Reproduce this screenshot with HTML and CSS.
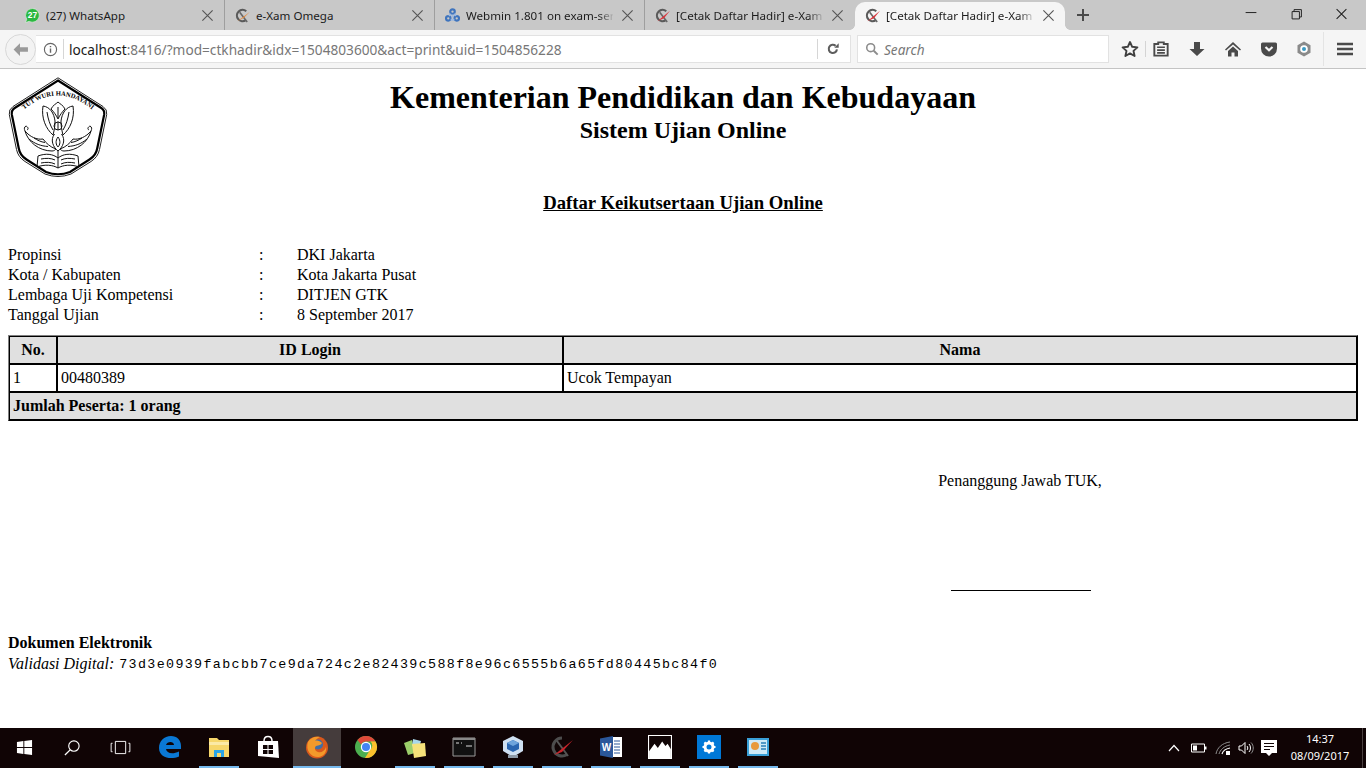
FILE: index.html
```html
<!DOCTYPE html>
<html lang="id">
<head>
<meta charset="utf-8">
<title>[Cetak Daftar Hadir] e-Xam Omega</title>
<link rel="stylesheet" href="styles.css">
</head>
<body>
<svg class="sprites" width="0" height="0">
  <symbol id="omega" viewBox="0 0 16 16">
    <path d="M12 3.500A6 6 0 1 0 11.500 13" fill="none" stroke="#5a5a5a" stroke-width="2.300"/>
    <path d="M5 4.500 13 15" stroke="#666" stroke-width="1.700"/>
    <path d="M2.500 14 16 3 9.500 11Z" fill="#d9343a"/>
  </symbol>
  <symbol id="omega-orange" viewBox="0 0 16 16">
    <path d="M12 3.500A6 6 0 1 0 11.500 13" fill="none" stroke="#5a5a5a" stroke-width="2.300"/>
    <path d="M5 4.500 13 15" stroke="#666" stroke-width="1.700"/>
    <path d="M2.500 14 16 4 9.500 10.500Z" fill="#e58a3b"/>
  </symbol>
  <symbol id="close" viewBox="0 0 14 14">
    <path d="M1.500 1.500l11 11M12.500 1.500l-11 11" stroke="#555" stroke-width="1.200" fill="none"/>
  </symbol>
</svg>

<div class="tabbar">
  <div class="tab tab-first">
    <svg class="fav" viewBox="0 0 16 16"><path d="M8 .5a7.300 7.300 0 1 1-3.600 13.700L.6 15.500l1.300-3.600A7.300 7.300 0 0 1 8 .5Z" fill="#2bb741" stroke="#e8f5e8" stroke-width=".6"/><text x="8" y="11" class="fav-num">27</text></svg>
    <span class="tab-title">(27) WhatsApp</span>
    <svg class="tab-x"><use href="#close"/></svg>
  </div>
  <div class="tab">
    <svg class="fav"><use href="#omega-orange"/></svg>
    <span class="tab-title">e-Xam Omega</span>
    <svg class="tab-x"><use href="#close"/></svg>
  </div>
  <div class="tab">
    <svg class="fav" viewBox="0 0 16 16"><g fill="none" stroke="#3f74bd" stroke-width="2.300"><circle cx="8" cy="3.800" r="2.400"/><circle cx="3.500" cy="11" r="2.400"/><circle cx="12.500" cy="11" r="2.400"/></g><path d="M6 6 4.500 8.500M10 6l1.500 2.500M6 12.500h4M8 7v3" stroke="#9db9e0" stroke-width="2" fill="none"/></svg>
    <span class="tab-title tab-fade">Webmin 1.801 on exam-serv</span>
    <svg class="tab-x"><use href="#close"/></svg>
  </div>
  <div class="tab tab-last">
    <svg class="fav"><use href="#omega"/></svg>
    <span class="tab-title tab-fade">[Cetak Daftar Hadir] e-Xam F</span>
    <svg class="tab-x"><use href="#close"/></svg>
  </div>
  <div class="tab tab-active">
    <svg class="fav"><use href="#omega"/></svg>
    <span class="tab-title tab-fade">[Cetak Daftar Hadir] e-Xam F</span>
    <svg class="tab-x"><use href="#close"/></svg>
  </div>
  <svg class="newtab" viewBox="0 0 12 12"><path d="M6 0v12M0 6h12" stroke="#4a4a4a" stroke-width="2"/></svg>
  <div class="winctl">
    <svg viewBox="0 0 46 30"><path d="M17 12.500h11" stroke="#222"/></svg>
    <svg viewBox="0 0 46 30"><path d="M18.500 11.500h7.500v7.500h-7.500zM20.500 11.500v-2h7.500v7.500h-2" fill="none" stroke="#222"/></svg>
    <svg viewBox="0 0 46 30"><path d="M18 9l10 10M28 9l-10 10" stroke="#222" stroke-width="1.100"/></svg>
  </div>
</div>

<div class="toolbar">
  <div class="back"><svg viewBox="0 0 16 16"><path d="M7.500 2 1.500 8l6 6V10.200H15V5.800H7.500Z" fill="#9a9a9a"/></svg></div>
  <div class="urlbar">
    <svg class="info" viewBox="0 0 16 16"><circle cx="8" cy="8" r="6.500" fill="none" stroke="#666" stroke-width="1.200"/><path d="M8 7v4.500M8 4.200v1.500" stroke="#666" stroke-width="1.500"/></svg>
    <span class="sep"></span>
    <span class="url"><span class="url-host">localhost</span>:8416/?mod=ctkhadir&amp;idx=1504803600&amp;act=print&amp;uid=1504856228</span>
    <span class="sep sep-reload"></span>
    <svg class="reload" viewBox="0 0 16 16"><path d="M12.500 8.500A4.700 4.700 0 1 1 11 4.400" fill="none" stroke="#5d5d5d" stroke-width="2.400"/><path d="M9.500 6.500h5v-5Z" fill="#5d5d5d"/></svg>
  </div>
  <div class="searchbar">
    <svg class="mag" viewBox="0 0 16 16"><circle cx="6.500" cy="6.500" r="4.500" fill="none" stroke="#8c8c8c" stroke-width="1.800"/><path d="M10 10l4.500 4.500" stroke="#8c8c8c" stroke-width="2.200"/></svg>
    <span>Search</span>
  </div>
  <div class="tools">
    <svg class="ti ti-star" viewBox="0 0 18 18"><path d="M9 2l2.200 4.800 5.200.6-3.900 3.500 1.100 5.100L9 13.400 4.400 16l1.100-5.100L1.600 7.400l5.200-.6Z" fill="none" stroke="#3f3f3f" stroke-width="1.900" stroke-linejoin="round"/></svg>
    <span class="tool-sep"></span>
    <svg class="ti ti-clip" viewBox="0 0 18 18"><path d="M3 4.500h3.500V3h5v1.500H15v10.500H3Z" fill="none" stroke="#4a4a4a" stroke-width="1.700"/><path d="M5.500 7.500h7M5.500 10h7M5.500 12.500h7" stroke="#4a4a4a" stroke-width="1.400"/></svg>
    <svg class="ti ti-down" viewBox="0 0 18 18"><path d="M6 2h6v7h4.500L9 16 1.500 9H6Z" fill="#4a4a4a"/></svg>
    <svg class="ti ti-home" viewBox="0 0 18 18"><path d="M9 2 1 9.500l1 1L9 4.500l7 6 1-1Z" fill="#4a4a4a"/><path d="M4 11 9 6.500 14 11v5.500h-3.500v-4h-3v4H4Z" fill="#4a4a4a"/></svg>
    <svg class="ti ti-pocket" viewBox="0 0 18 18"><path d="M2.500 2.500h13a1.500 1.500 0 0 1 1.500 1.500v4.500a8 8 0 0 1-16 0V4a1.500 1.500 0 0 1 1.500-1.500Z" fill="#4a4a4a"/><path d="M5.500 7 9 10.300 12.500 7" fill="none" stroke="#f5f5f5" stroke-width="2.200"/></svg>
    <svg class="ti ti-eye" viewBox="0 0 18 18"><path d="M9 1.500l6.500 3.700v7.600L9 16.500l-6.500-3.700V5.200Z" fill="#8a8a8a"/><circle cx="9" cy="9" r="3.800" fill="#fff"/><circle cx="9" cy="9" r="2" fill="#3a9ac4"/></svg>
    <span class="tool-sep tool-sep-tall"></span>
    <svg class="ti ti-menu" viewBox="0 0 16 14"><path d="M0 2h16M0 7h16M0 12h16" stroke="#4a4a4a" stroke-width="2.600"/></svg>
  </div>
</div>

<main class="page">
  <header class="head">
    <svg class="logo" viewBox="0 0 100 100">
      <path d="M50 .8 95 29.500Q99.500 32.500 98.700 37.500L91.500 72.500Q90 80 83 84.500L63 97Q50 102 37 97L17 84.500Q10 80 8.500 72.500L1.300 37.500Q.5 32.500 5 29.500Z" fill="#fff" stroke="#222" stroke-width="1"/>
      <path d="M50 3.500 93.300 31Q96.800 33.300 96.200 37.500L89.200 71.500Q88 78.500 81.500 82.500L62 95Q50 99.500 38 95L18.500 82.500Q12 78.500 10.800 71.500L3.800 37.500Q3.200 33.300 6.700 31Z" fill="none" stroke="#000" stroke-width="2.200"/>
      <path id="logoArc" d="M6 42Q50 -5 94 42" fill="none"/>
      <text class="logo-text"><textPath href="#logoArc" startOffset="50%" text-anchor="middle">TUT WURI HANDAYANI</textPath></text>
      <g fill="none" stroke="#111" stroke-width="1">
        <path d="M35 29C42 30 46 36 47 44 47 50 46 54 45 58 38 52 33 41 35 29Z"/>
        <path d="M65 29C58 30 54 36 53 44 53 50 54 54 55 58 62 52 67 41 65 29Z"/>
        <path d="M43 32C45 28 48 27 50 25 52 27 55 28 57 32 54 35 52 38 50 42 48 38 46 35 43 32Z"/>
        <path d="M39 35C40 42 42 48 45 53M61 35C60 42 58 48 55 53M50 30V41"/>
        <circle cx="50" cy="49" r="4"/>
        <path d="M50 44.500V53M46.500 57C42 63 45 70 50 74 55 70 58 63 53.500 57"/>
        <path d="M50 60C47 64 48 68 50 70 52 68 53 64 50 60Z"/>
        <path d="M17 54C20 65 31 74 44 74 46 74 47 73 48 72 42 70 38 66 35 62 29 63 22 60 17 54Z"/>
        <path d="M21 62C27 67 33 69 40 69.500M26 61C29 63 33 65 37 65.500M17 54C16 52 16 50 18 49 20 50 21 52 19 53"/>
        <path d="M83 54C80 65 69 74 56 74 54 74 53 73 52 72 58 70 62 66 65 62 71 63 78 60 83 54Z"/>
        <path d="M79 62C73 67 67 69 60 69.500M74 61C71 63 67 65 63 65.500M83 54C84 52 84 50 82 49 80 50 79 52 81 53"/>
        <path d="M30 79C38 76 45 77 50 81 55 77 62 76 70 79L71 90C63 87 55 88 50 91 45 88 37 87 29 90Z"/>
        <path d="M50 74V91M33 82C38 81 43 81 47 83M33 86C38 85 43 85 47 87M67 82C62 81 57 81 53 83M67 86C62 85 57 85 53 87"/>
      </g>
    </svg>
    <div class="titles">
      <h1>Kementerian Pendidikan dan Kebudayaan</h1>
      <h2>Sistem Ujian Online</h2>
    </div>
  </header>

  <h3 class="doc-title">Daftar Keikutsertaan Ujian Online</h3>

  <dl class="meta">
    <dt>Propinsi</dt><dd>:</dd><dd>DKI Jakarta</dd>
    <dt>Kota / Kabupaten</dt><dd>:</dd><dd>Kota Jakarta Pusat</dd>
    <dt>Lembaga Uji Kompetensi</dt><dd>:</dd><dd>DITJEN GTK</dd>
    <dt>Tanggal Ujian</dt><dd>:</dd><dd>8 September 2017</dd>
  </dl>

  <table class="list">
    <colgroup><col class="c-no"><col class="c-id"><col></colgroup>
    <thead>
      <tr><th>No.</th><th>ID Login</th><th>Nama</th></tr>
    </thead>
    <tbody>
      <tr><td>1</td><td>00480389</td><td>Ucok Tempayan</td></tr>
    </tbody>
    <tfoot>
      <tr><th colspan="3">Jumlah Peserta: 1 orang</th></tr>
    </tfoot>
  </table>

  <div class="sign">
    <div class="sign-box">
      <p class="sign-role">Penanggung Jawab TUK,</p>
      <div class="sign-line"></div>
    </div>
  </div>

  <div class="digital">
    <strong>Dokumen Elektronik</strong>
    <p><em>Validasi Digital:</em> <code>73d3e0939fabcbb7ce9da724c2e82439c588f8e96c6555b6a65fd80445bc84f0</code></p>
  </div>
</main>

<footer class="taskbar">
  <div class="task task-sys"><svg viewBox="0 0 18 18"><path d="M1 3.200 7.800 2.200V8.400H1ZM8.800 2 17 1V8.400H8.800ZM1 9.500H7.800V15.800L1 14.800ZM8.800 9.500H17V17L8.800 15.900Z" fill="#fff"/></svg></div>
  <div class="task task-sys"><svg viewBox="0 0 18 18"><circle cx="10.500" cy="7.500" r="5.500" fill="none" stroke="#fff" stroke-width="1.200"/><path d="M6.500 11.500 1 17" stroke="#fff" stroke-width="1.400"/></svg></div>
  <div class="task task-view"><svg viewBox="0 0 22 16"><path d="M5.500 1.500h11v13h-11zM2.500 3.500H1v9h1.500M19.500 3.500H21v9h-1.500" fill="none" stroke="#fff" stroke-width="1"/></svg></div>
  <div class="task"><svg viewBox="0 0 24 24"><path d="M1 13C1 6 6 1 13 1c6 0 10 4 10 10v3H8c.5 4 6 6 13 2.500v5C13 25 1 23 1 13Zm7-3h8c0-4-7-4-8 0Z" fill="#0a78d4"/></svg></div>
  <div class="task task-run"><svg viewBox="0 0 24 24"><path d="M2 3h8l2 2h10v17H2Z" fill="#f6d76b"/><path d="M2 7h20v3H2Z" fill="#fbeaa6"/><path d="M7 15h10v7h-3v-4h-4v4H7Z" fill="#29a4e8"/></svg></div>
  <div class="task"><svg viewBox="0 0 24 24"><path d="M2 6h20l1 17L2 21Z" fill="#fff"/><path d="M8 6c0-6 8-6 8 0" fill="none" stroke="#fff" stroke-width="1.500"/><path d="M7 10h4.500v4H7ZM12.500 10H17v4h-4.500ZM7 15h4.500v4H7ZM12.500 15H17v4h-4.500Z" fill="#100405"/></svg></div>
  <div class="task task-run task-on"><svg viewBox="0 0 24 24"><circle cx="12" cy="12.500" r="11" fill="#d9581c"/><circle cx="13" cy="9.500" r="5" fill="#3f6ea6"/><path d="M3 7c-3 9 4 16 11 15 5-1 8-5 7-10-1 4-5 6-8 5-3-1-4-4-2-6 3-1 5-1 6-3-2-2-5-3-7-2 1-2 3-3 5-4C10 1 5 3 3 7Z" fill="#f39a2a"/></svg></div>
  <div class="task"><svg viewBox="0 0 24 24"><circle cx="12" cy="12" r="11" fill="#4caf50"/><path d="M12 1a11 11 0 0 1 9.500 5.500H12a5.500 5.500 0 0 0-5 3L3.500 5A11 11 0 0 1 12 1Z" fill="#e04a3a"/><path d="M21.500 6.500A11 11 0 0 1 11 23l5-8a5.500 5.500 0 0 0 .5-8.500Z" fill="#fbc02d"/><circle cx="12" cy="12" r="5.200" fill="#fff"/><circle cx="12" cy="12" r="4" fill="#4285f4"/></svg></div>
  <div class="task task-run"><svg viewBox="0 0 24 24"><path d="M1 8 9 5l3 13-7 2Z" fill="#9ccf6a"/><path d="M10 4l8 2-2 8-7-3Z" fill="#a8d8ea"/><path d="M9 9l13-1 1 13-12 2Z" fill="#f6e27a"/></svg></div>
  <div class="task task-run"><svg viewBox="0 0 24 24"><path d="M1 3h22v18H1Z" fill="#111" stroke="#999"/><path d="M1 3h22v2H1Z" fill="#888"/><path d="M4 8h3M9 8h1M14 11h6" stroke="#ddd"/></svg></div>
  <div class="task task-run"><svg viewBox="0 0 24 24"><path d="M12 1 22 6v10l-10 6L2 16V6Z" fill="#cfe0f2"/><path d="M12 5l6 3v6l-6 3-6-3V8Z" fill="#2a65b0"/><path d="M12 11 6 8l6-3 6 3Z" fill="#6ea4dc"/><path d="M7 20h10v3H7Z" fill="#8e9aa8"/></svg></div>
  <div class="task task-run"><svg viewBox="0 0 24 24"><path d="M12 3a9 9 0 1 0 5 16.500" fill="none" stroke="#4d4d4d" stroke-width="3"/><path d="M7 6l11 15" stroke="#555" stroke-width="2"/><path d="M4 20 23 5 12 17Z" fill="#c9242b"/></svg></div>
  <div class="task task-run"><svg viewBox="0 0 24 24"><path d="M12 2h11v20H12Z" fill="#fff"/><path d="M15 6h6M15 9h6M15 12h6M15 15h6M15 18h6" stroke="#2b579a"/><path d="M1 3.500 14 1v22L1 20.500Z" fill="#2b579a"/><text x="7.500" y="15.500" class="word-w">W</text></svg></div>
  <div class="task task-run"><svg viewBox="0 0 22 22"><path d="M.5.500h21v21H.5Z" fill="#100405" stroke="#fff"/><path d="M1 21v-6l5-7 3 4 4-6 3 4 2-2 3 5v8Z" fill="#fff"/></svg></div>
  <div class="task task-run"><svg class="ic-set" viewBox="0 0 24 24"><path d="M0 0h24v24H0Z" fill="#0078d7"/><circle cx="12" cy="12" r="4" fill="none" stroke="#fff" stroke-width="3"/><path d="M12 5.500v13M5.500 12h13M7.400 7.400l9.200 9.200M16.600 7.400l-9.200 9.200" stroke="#fff" stroke-width="2.200" stroke-dasharray="2.400 8.200"/></svg></div>
  <div class="task task-run"><svg viewBox="0 0 24 24"><path d="M1 3h22v18H1Z" fill="#3aa0d8"/><path d="M3 5h18v14H3Z" fill="#cfeaf7"/><circle cx="9" cy="11" r="4" fill="#e89a3c"/><path d="M15 8h5M15 11h5M15 14h5" stroke="#2a7fb8" stroke-width="1.500"/></svg></div>
  <div class="tray">
    <svg class="tr tr-up" viewBox="0 0 12 8"><path d="M1 7 6 1.500 11 7" fill="none" stroke="#fff" stroke-width="1.200"/></svg>
    <svg class="tr tr-bat" viewBox="0 0 16 10"><path d="M.5 1h13v8H.5Z" fill="none" stroke="#fff"/><path d="M14 3.500h1.500v3H14ZM2 2.500h4v5H2Z" fill="#fff"/></svg>
    <svg class="tr tr-wifi" viewBox="0 0 16 14"><g fill="none" stroke="#8e8e8e"><path d="M1 13C2 7 7 2 15 1"/><path d="M4 13C5 9 9 5 15 4"/></g><path d="M7 13c.5-2 3-5 8-6" fill="none" stroke="#fff" stroke-width="1.200"/><path d="M11 10h4v4h-4Z" fill="#fff"/></svg>
    <svg class="tr tr-vol" viewBox="0 0 16 14"><path d="M1 5h2.500L7 1.500v11L3.500 9H1Z" fill="none" stroke="#fff"/><path d="M9 5c1 1 1 3 0 4M11 3c2 2 2 6 0 8" fill="none" stroke="#fff"/><path d="M13 1.500c3 3 3 8 0 11" fill="none" stroke="#8e8e8e"/></svg>
    <svg class="tr tr-note" viewBox="0 0 18 18"><path d="M1 1h16v13h-5l-3 3-3-3H1Z" fill="#fff"/><path d="M4 4.500h10M4 7.500h10M4 10.500h6" stroke="#100405"/></svg>
    <div class="clock"><span>14:37</span><span>08/09/2017</span></div>
    <span class="showdesk"></span>
  </div>
</footer>
</body>
</html>
```
FILE: styles.css
```css
* { box-sizing: border-box; }
html, body { margin: 0; padding: 0; }
body {
  width: 1366px;
  height: 768px;
  overflow: hidden;
  display: flex;
  flex-direction: column;
  background: #fff;
  color: #000;
  font-family: "Liberation Serif", serif;
  font-size: 16px;
}
.sprites { display: block; height: 0; }

/* tab strip */
.tabbar {
  height: 30px;
  flex: none;
  display: flex;
  align-items: stretch;
  padding-left: 15px;
  background: #c8c8c8;
  font-family: "Noto Sans", sans-serif;
  font-size: 11.600px;
  color: #1c1c1c;
}
.tab {
  width: 210px;
  display: flex;
  align-items: center;
  padding: 1px 0 0 10px;
  border-right: 1px solid #9e9e9e;
}
.tab-last { border-right-color: transparent; }
.tab-active {
  position: relative;
  margin-top: 2px;
  background: #f5f5f5;
  border: 0;
  border-radius: 10px 10px 0 0;
  padding-bottom: 2px;
}
.tab-active::before,
.tab-active::after {
  content: "";
  position: absolute;
  bottom: 0;
  width: 5px;
  height: 5px;
}
.tab-active::before {
  left: -5px;
  background: radial-gradient(circle at 0 0, transparent 4.500px, #f5f5f5 5px);
}
.tab-active::after {
  right: -5px;
  background: radial-gradient(circle at 100% 0, transparent 4.500px, #f5f5f5 5px);
}
.fav { width: 15px; height: 15px; flex: none; }
.fav-num { font: bold 9px "Liberation Sans", sans-serif; fill: #fff; text-anchor: middle; }
.tab-title {
  flex: 1;
  min-width: 0;
  margin-left: 6px;
  white-space: nowrap;
}
.tab-fade {
  -webkit-mask-image: linear-gradient(90deg, #000 90%, rgba(0, 0, 0, .1));
  mask-image: linear-gradient(90deg, #000 90%, rgba(0, 0, 0, .1));
}
.tab-x { width: 13px; height: 13px; flex: none; margin: 0 10px 0 8px; }
.newtab { width: 12px; height: 12px; flex: none; align-self: center; margin-left: 12px; }
.winctl { margin-left: auto; padding-right: 2px; display: flex; }
.winctl svg { width: 45px; height: 30px; display: block; }

/* navigation toolbar */
.toolbar {
  height: 39px;
  flex: none;
  display: flex;
  align-items: center;
  padding-left: 5px;
  background: #f5f5f5;
  border-bottom: 1px solid #c4c4c4;
}
.back {
  width: 31px;
  height: 31px;
  flex: none;
  z-index: 1;
  display: flex;
  align-items: center;
  justify-content: center;
  border: 1px solid #d8d8d8;
  border-radius: 50%;
  background: #f3f3f3;
}
.back svg { width: 17px; height: 17px; }
.urlbar {
  width: 815px;
  height: 28px;
  flex: none;
  display: flex;
  align-items: center;
  background: #fff;
  border: 1px solid #e2e2e2;
  border-left: 0;
  font-family: "Noto Sans", sans-serif;
  font-size: 13.660px;
  color: #777;
}
.info { width: 15px; height: 15px; margin-left: 7px; flex: none; }
.sep { width: 1px; height: 20px; background: #d6d6d6; flex: none; margin: 0 5px; }
.url { flex: 1; white-space: nowrap; overflow: hidden; }
.url-host { color: #1a1a1a; }
.sep-reload { margin: 0 8px 0 0; }
.reload { width: 14px; height: 14px; margin-right: 10px; flex: none; }
.searchbar {
  width: 252px;
  height: 28px;
  flex: none;
  margin-left: 6px;
  display: flex;
  align-items: center;
  background: #fff;
  border: 1px solid #e2e2e2;
  font-family: "Noto Sans", sans-serif;
  font-size: 13.600px;
  font-style: italic;
  color: #777;
}
.mag { width: 14px; height: 14px; margin: 0 5px 0 7px; flex: none; }
.tools { flex: 1; display: flex; align-items: center; height: 100%; }
.ti { flex: none; display: block; width: 18px; height: 18px; }
.ti-star { margin-left: 12px; }
.tool-sep { width: 1px; height: 16px; background: #d4d4d4; margin-left: 6px; flex: none; }
.ti-clip { width: 20px; height: 20px; margin-left: 5px; }
.ti-down { margin-left: 17px; }
.ti-home { margin-left: 18px; }
.ti-pocket { margin-left: 18px; }
.ti-eye { margin-left: 17px; }
.tool-sep-tall { height: 34px; margin-left: 10px; background: #e4e4e4; }
.ti-menu { width: 16px; height: 14px; margin-left: 13px; }

/* document */
.page {
  flex: 1;
  min-height: 0;
  padding: 8px 8px 0;
  overflow: hidden;
}
.head { display: grid; }
.logo, .titles { grid-area: 1 / 1; }
.logo { width: 100px; height: 100px; display: block; overflow: visible; }
.logo-text { font: bold 6.600px "Liberation Serif", serif; }
.titles { text-align: center; padding-top: 2px; }
h1 { margin: 0; font-size: 32px; line-height: 37px; font-weight: bold; }
h2 { margin: 0; font-size: 24px; line-height: 28px; font-weight: bold; }
.doc-title {
  margin: 15px 0 0;
  text-align: center;
  font-size: 18.720px;
  line-height: 22px;
  font-weight: bold;
  text-decoration: underline;
}
.meta {
  margin: 31px 0 0;
  display: grid;
  grid-template-columns: 251px 38px 1fr;
  line-height: 20px;
}
.meta dt, .meta dd { margin: 0; }

.list {
  margin-top: 10px;
  width: 1350px;
  table-layout: fixed;
  border-collapse: separate;
  border-spacing: 0;
  border: 1px solid #000;
  border-top-color: #808080;
  border-left-color: #808080;
}
.c-no { width: 48px; }
.c-id { width: 506px; }
.list th, .list td {
  height: 28px;
  padding: 0 3px;
  border: 1px solid #000;
  line-height: 20px;
  font-size: 16px;
}
.list th { background: #e0e0e0; text-align: center; }
.list tfoot th { text-align: left; }

.sign { display: flex; justify-content: flex-end; padding-right: 256px; margin-top: 50px; }
.sign-box { width: 164px; display: flex; flex-direction: column; align-items: center; }
.sign-role { margin: 0; line-height: 20px; white-space: nowrap; }
.sign-line { width: 140px; height: 1px; margin: 99px 0 0 2px; background: #000; }

.digital { margin-top: 42px; line-height: 20px; }
.digital strong { display: block; }
.digital p { margin: 1px 0 0; }
code {
  margin-left: 1px;
  font-family: "Liberation Mono", monospace;
  font-size: 13.333px;
  letter-spacing: 1.360px;
  vertical-align: 1px;
}

/* Windows taskbar */
.taskbar {
  height: 40px;
  flex: none;
  display: flex;
  background: #100405;
  color: #fff;
}
.task {
  position: relative;
  width: 49px;
  height: 40px;
  flex: none;
  display: flex;
  align-items: center;
  justify-content: center;
  padding-bottom: 2px;
}
.task svg { width: 24px; height: 24px; }
.task-sys { width: 48px; }
.task-sys svg { width: 17px; height: 17px; }
.task-view svg { width: 21px; height: 15px; }
.word-w { font: bold 10px "Liberation Sans", sans-serif; fill: #fff; text-anchor: middle; }
.task-run::after {
  content: "";
  position: absolute;
  left: 5px;
  right: 4px;
  bottom: 0;
  height: 2px;
  background: #76b9ed;
}
.task-on { background: #453c3c; box-shadow: inset 1px 0 #100405; }
.task-on::after { left: 1px; right: 0; }
.tray { margin-left: auto; display: flex; align-items: center; height: 100%; }
.tr { flex: none; display: block; }
.tr-up { width: 12px; height: 8px; }
.tr-bat { width: 16px; height: 10px; margin-left: 11px; }
.tr-wifi { width: 16px; height: 14px; margin-left: 8px; }
.tr-vol { width: 16px; height: 14px; margin-left: 7px; }
.tr-note { width: 18px; height: 18px; margin-left: 6px; }
.clock {
  margin-left: 11px;
  padding-bottom: 2px;
  width: 62px;
  display: flex;
  flex-direction: column;
  align-items: center;
  font-family: "Noto Sans", sans-serif;
  font-size: 11px;
  line-height: 17px;
}
.showdesk { width: 1px; height: 100%; margin-left: 11px; margin-right: 3px; background: #4a4040; }
```
